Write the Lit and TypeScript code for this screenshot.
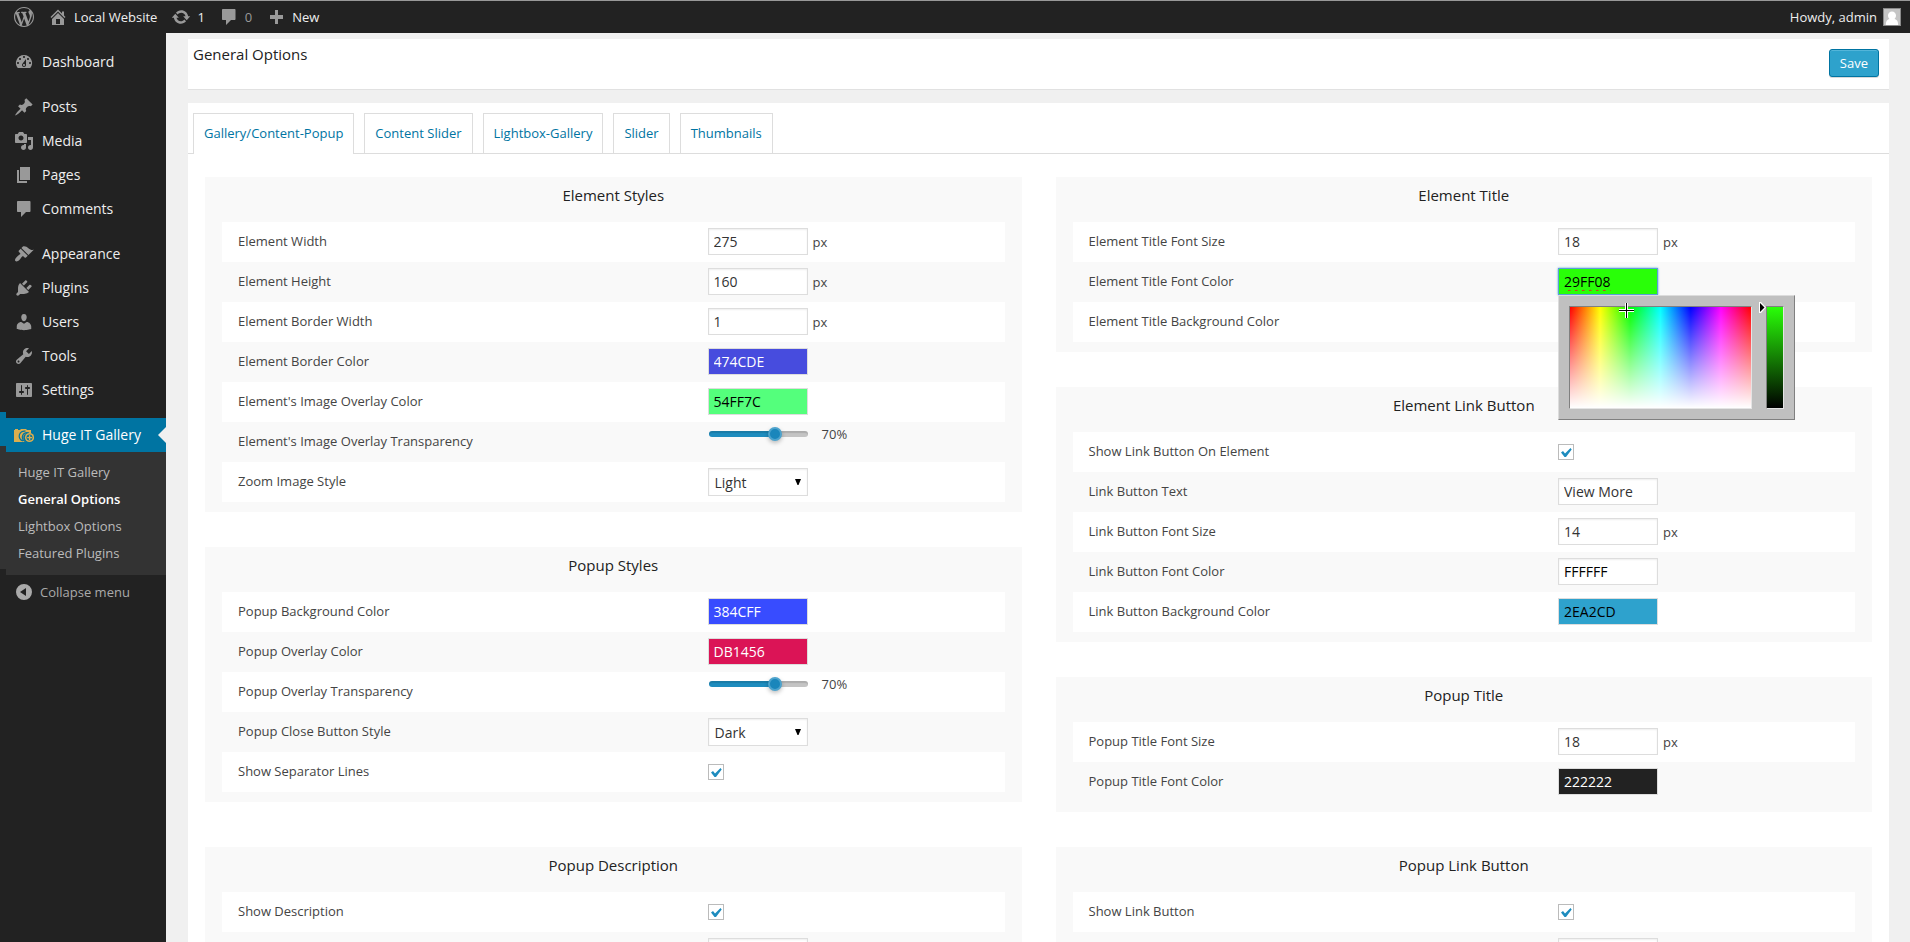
import { LitElement, html, svg, css, nothing } from "lit";
import { customElement, property } from "lit/decorators.js";
import { classMap } from "lit/directives/class-map.js";
import { ifDefined } from "lit/directives/if-defined.js";
import { styleMap } from "lit/directives/style-map.js";

const ICONS: Record<string, string> = {
  wordpress:
    "M20 10c0-5.51-4.49-10-10-10C4.48 0 0 4.49 0 10c0 5.52 4.48 10 10 10 5.51 0 10-4.48 10-10zM7.78 15.37L4.37 6.22c.55-.02 1.17-.08 1.17-.08.5-.06.44-1.13-.06-1.11 0 0-1.45.11-2.37.11-.18 0-.37 0-.58-.01C4.12 2.69 6.87 1.11 10 1.11c2.33 0 4.45.87 6.05 2.34-.68-.11-1.65.39-1.65 1.58 0 .74.45 1.36.9 2.1.35.61.55 1.36.55 2.46 0 1.49-1.4 5-1.4 5l-3.03-8.37c.54-.02.82-.17.82-.17.5-.05.44-1.25-.06-1.22 0 0-1.44.12-2.38.12-.87 0-2.33-.12-2.33-.12-.5-.03-.56 1.2-.06 1.22l.92.08 1.26 3.41zM17.41 10c.24-.64.74-1.87.43-4.25.7 1.29 1.05 2.71 1.05 4.25 0 3.29-1.73 6.24-4.4 7.78.97-2.59 1.94-5.2 2.92-7.78zM6.1 18.09C3.12 16.65 1.11 13.53 1.11 10c0-1.3.23-2.48.72-3.59C3.25 10.3 4.67 14.2 6.1 18.09zm4.03-6.63l2.58 6.98c-.86.29-1.76.45-2.71.45-.79 0-1.57-.11-2.29-.33.81-2.38 1.62-4.74 2.42-7.1z",
  home: "M16 8.5l1.53 1.53-1.06 1.06L10 4.6l-6.47 6.49-1.06-1.06L10 2.5l4 4v-2h2v4zm-6-2.46l6 5.99V18H4v-5.97zM12 17v-5H8v5h4z",
  update:
    "M10.2 3.28c3.53 0 6.43 2.61 6.92 6h2.08l-3.5 4-3.5-4h2.32c-.45-1.97-2.21-3.45-4.32-3.45-1.45 0-2.73.71-3.54 1.78L4.95 5.66C6.23 4.2 8.11 3.28 10.2 3.28zm-.4 13.44c-3.52 0-6.43-2.61-6.92-6H.8l3.5-4c1.17 1.33 2.33 2.67 3.5 4H5.48c.45 1.97 2.21 3.45 4.32 3.45 1.45 0 2.73-.71 3.54-1.78l1.71 1.95c-1.28 1.46-3.15 2.38-5.25 2.38z",
  comment:
    "M4 2h11.500c.6 0 1 .4 1 1v9c0 .6-.4 1-1 1H12l-5 5v-5H4c-.6 0-1-.4-1-1V3c0-.6.4-1 1-1z",
  plus: "M17 8v4h-5v5H9v-5H4V8h5V3h3v5h5z",
  dashboard:
    "M3.76 16h12.480A7.998 7.998 0 0 0 10 3a7.998 7.998 0 0 0-6.240 13zM10 4c.55 0 1 .45 1 1s-.45 1-1 1-1-.45-1-1 .45-1 1-1zM6 6c.55 0 1 .45 1 1s-.45 1-1 1-1-.45-1-1 .45-1 1-1zm8 0c.55 0 1 .45 1 1s-.45 1-1 1-1-.45-1-1 .45-1 1-1zm-5.370 5.550L12 7v6c0 1.100-.9 2-2 2s-2-.9-2-2c0-.57.24-1.080.63-1.450zM4 10c.55 0 1 .45 1 1s-.45 1-1 1-1-.45-1-1 .45-1 1-1zm12 0c.55 0 1 .45 1 1s-.45 1-1 1-1-.45-1-1 .45-1 1-1zm-5 3c0-.55-.45-1-1-1s-1 .45-1 1 .45 1 1 1 1-.45 1-1z",
  post: "M10.44 3.02l1.82-1.82 6.36 6.35-1.83 1.82c-1.05-.68-2.48-.57-3.41.36l-.75.75c-.92.93-1.04 2.35-.35 3.41l-1.83 1.82-2.41-2.41-2.8 2.79c-.42.42-3.38 2.71-3.8 2.29s1.86-3.39 2.28-3.81l2.79-2.79L4.1 9.36l1.83-1.82c1.05.69 2.48.57 3.4-.36l.75-.75c.93-.92 1.05-2.35.36-3.41z",
  media:
    "M13 11V4c0-.55-.45-1-1-1h-1.67L9 1H5L3.67 3H2c-.55 0-1 .45-1 1v7c0 .55.45 1 1 1h10c.55 0 1-.45 1-1zM7 4.5c1.38 0 2.5 1.12 2.5 2.5S8.38 9.5 7 9.5 4.5 8.38 4.5 7 5.62 4.5 7 4.5zM14 6h5v10.5c0 1.38-1.12 2.5-2.5 2.5S14 17.88 14 16.5s1.12-2.5 2.5-2.5c.17 0 .34.02.5.05V9h-3V6zm-4 8.05V13h2v3.5c0 1.38-1.12 2.5-2.5 2.5S7 17.88 7 16.5 8.12 14 9.5 14c.17 0 .34.02.5.05z",
  page: "M6 15V2h10v13H6zm-1 1h8v2H3V5h2v11z",
  appearance:
    "M14.48 11.06L7.41 3.99l1.5-1.5c.5-.56 2.3-.47 3.51.32 1.21.8 1.43 1.28 2.91 2.1 1.18.64 2.45 1.26 4.45.85zm-.71.71L6.7 4.7 4.93 6.47c-.39.39-.39 1.02 0 1.41l1.06 1.06c.39.39.39 1.03 0 1.42-.6.6-1.43 1.11-2.21 1.69-.35.26-.7.53-1.01.84C1.43 14.23.4 16.08 1.4 17.07c.99 1 2.84-.03 4.18-1.36.31-.31.58-.66.85-1.02.57-.78 1.08-1.61 1.69-2.21.39-.39 1.02-.39 1.41 0l1.06 1.06c.39.39 1.02.39 1.41 0z",
  plugins:
    "M13.11 4.36L9.87 7.6 8 5.73l3.24-3.24c.35-.34 1.05-.2 1.56.32.52.51.66 1.21.31 1.55zm-8 1.77l.91-1.12 9.01 9.01-1.19.84c-.71.71-2.63 1.16-3.82 1.16H6.14L4.9 17.26c-.59.59-1.54.59-2.12 0-.59-.58-.59-1.53 0-2.12l1.24-1.24v-3.88c0-1.13.4-3.19 1.09-3.89zm7.26 3.97l3.24-3.24c.34-.35 1.04-.21 1.55.31.52.51.66 1.21.31 1.55l-3.24 3.25z",
  users:
    "M10 9.25c-2.27 0-2.73-3.44-2.73-3.44C7 4.02 7.82 2 9.97 2c2.16 0 2.98 2.02 2.71 3.81 0 0-.41 3.44-2.68 3.44zm0 2.57L12.72 10c2.39 0 4.52 2.33 4.52 4.53v2.49s-3.65 1.13-7.24 1.13c-3.65 0-7.24-1.13-7.24-1.13v-2.49c0-2.25 1.94-4.48 4.47-4.48z",
  tools:
    "M16.68 9.77c-1.34 1.34-3.3 1.67-4.95.99l-5.41 6.52c-.99.99-2.59.99-3.58 0s-.99-2.59 0-3.57l6.52-5.42c-.68-1.65-.35-3.61.99-4.95 1.28-1.28 3.12-1.62 4.72-1.06l-2.89 2.89 2.82 2.82 2.86-2.87c.53 1.58.18 3.39-1.08 4.65zM3.81 16.21c.4.39 1.04.39 1.43 0 .4-.4.4-1.04 0-1.43-.39-.4-1.03-.4-1.43 0-.39.39-.39 1.03 0 1.43z",
  settings:
    "M18 16V4c0-.55-.45-1-1-1H3c-.55 0-1 .45-1 1v12c0 .55.45 1 1 1h14c.55 0 1-.45 1-1zM8 11h1c.55 0 1 .45 1 1s-.45 1-1 1H8v1.5c0 .28-.22.5-.5.5s-.5-.22-.5-.5V13H6c-.55 0-1-.45-1-1s.45-1 1-1h1V5.5c0-.28.22-.5.5-.5s.5.22.5.5V11zm5-2h-1c-.55 0-1-.45-1-1s.45-1 1-1h1V5.5c0-.28.22-.5.5-.5s.5.22.5.5V7h1c.55 0 1 .45 1 1s-.45 1-1 1h-1v5.5c0 .28-.22.5-.5.5s-.5-.22-.5-.5V9z",
  collapse: "M10 2a8 8 0 1 0 0 16 8 8 0 0 0 0-16zM12 6v8l-6-4z",
};

const icon = (name: string) => html`
  <svg class="icon" viewBox="0 0 20 20" aria-hidden="true">
    ${svg`<path fill-rule="evenodd" d=${ICONS[name]}></path>`}
  </svg>
`;

const galleryIcon = html`
  <svg class="icon" viewBox="0 0 20 20" aria-hidden="true">
    <path fill="#dbae4e" d="M0 5h1V4h3v1h2l1-1h5l1 1h4v3.500a5 5 0 0 0-5.500 8.500H0z"></path>
    <path fill="none" stroke="#0074a2" stroke-width="1.200" d="M11.500 6.200a5 5 0 0 0-2.500 9.800M15 8a4.600 4.600 0 0 0-4 8.500"></path>
    <circle cx="15.500" cy="12.500" r="4.600" fill="#dbae4e"></circle>
    <circle cx="15.500" cy="12.500" r="3" fill="#0074a2"></circle>
    <path fill="#dbae4e" d="M14.900 10.200h1.400v1.700H18v1.400h-1.700V15h-1.400v-1.700h-1.700v-1.400h1.700z"></path>
  </svg>
`;

type Field =
  | { kind: "number"; label: string; value: string }
  | { kind: "text"; label: string; value: string }
  | { kind: "color"; label: string; value: string; ink: string; open?: boolean }
  | { kind: "range"; label: string; value: number }
  | { kind: "select"; label: string; value: string; options: string[] }
  | { kind: "check"; label: string }
  | { kind: "blank"; label: string; name: string };

interface Panel {
  title: string;
  fields: Field[];
}

const SECTIONS: Panel[][][] = [
  [
    [
      {
        title: "Element Styles",
        fields: [
          { kind: "number", label: "Element Width", value: "275" },
          { kind: "number", label: "Element Height", value: "160" },
          { kind: "number", label: "Element Border Width", value: "1" },
          { kind: "color", label: "Element Border Color", value: "474CDE", ink: "#fff" },
          { kind: "color", label: "Element's Image Overlay Color", value: "54FF7C", ink: "#000" },
          { kind: "range", label: "Element's Image Overlay Transparency", value: 70 },
          { kind: "select", label: "Zoom Image Style", value: "Light", options: ["Light", "Dark"] },
        ],
      },
      {
        title: "Popup Styles",
        fields: [
          { kind: "color", label: "Popup Background Color", value: "384CFF", ink: "#fff" },
          { kind: "color", label: "Popup Overlay Color", value: "DB1456", ink: "#fff" },
          { kind: "range", label: "Popup Overlay Transparency", value: 70 },
          { kind: "select", label: "Popup Close Button Style", value: "Dark", options: ["Dark", "Light"] },
          { kind: "check", label: "Show Separator Lines" },
        ],
      },
    ],
    [
      {
        title: "Element Title",
        fields: [
          { kind: "number", label: "Element Title Font Size", value: "18" },
          { kind: "color", label: "Element Title Font Color", value: "29FF08", ink: "#000", open: true },
          { kind: "color", label: "Element Title Background Color", value: "FFFFFF", ink: "#000" },
        ],
      },
      {
        title: "Element Link Button",
        fields: [
          { kind: "check", label: "Show Link Button On Element" },
          { kind: "text", label: "Link Button Text", value: "View More" },
          { kind: "number", label: "Link Button Font Size", value: "14" },
          { kind: "color", label: "Link Button Font Color", value: "FFFFFF", ink: "#000" },
          { kind: "color", label: "Link Button Background Color", value: "2EA2CD", ink: "#000" },
        ],
      },
      {
        title: "Popup Title",
        fields: [
          { kind: "number", label: "Popup Title Font Size", value: "18" },
          { kind: "color", label: "Popup Title Font Color", value: "222222", ink: "#fff" },
        ],
      },
    ],
  ],
  [
    [
      {
        title: "Popup Description",
        fields: [
          { kind: "check", label: "Show Description" },
          { kind: "blank", label: "", name: "Description Font Size" },
        ],
      },
    ],
    [
      {
        title: "Popup Link Button",
        fields: [
          { kind: "check", label: "Show Link Button" },
          { kind: "blank", label: "", name: "Link Button Text" },
        ],
      },
    ],
  ],
];

const MENU: [string, string][][] = [
  [["dashboard", "Dashboard"]],
  [
    ["post", "Posts"],
    ["media", "Media"],
    ["page", "Pages"],
    ["comment", "Comments"],
  ],
  [
    ["appearance", "Appearance"],
    ["plugins", "Plugins"],
    ["users", "Users"],
    ["tools", "Tools"],
    ["settings", "Settings"],
  ],
];

const SUBMENU = ["Huge IT Gallery", "General Options", "Lightbox Options", "Featured Plugins"];
const TABS = ["Gallery/Content-Popup", "Content Slider", "Lightbox-Gallery", "Slider", "Thumbnails"];

@customElement("color-picker")
export class ColorPicker extends LitElement {
  @property() color = "29FF08";

  static styles = css`
    :host {
      box-sizing: border-box;
      display: flex;
      align-items: flex-start;
      gap: 14px;
      padding: 10px;
      background: #c0c0c0;
      border: 1px solid;
      border-color: #dcdcdc #808080 #808080 #dcdcdc;
    }
    .field,
    .value {
      position: relative;
      height: 101px;
      border: 1px solid;
      border-color: #808080 #e4e4e4 #e4e4e4 #808080;
    }
    .field {
      width: 181px;
      background:
        linear-gradient(to bottom, rgba(255, 255, 255, 0), #fff),
        linear-gradient(to right, #f00, #ff0, #0f0, #0ff, #00f, #f0f, #f00);
    }
    .value {
      width: 16px;
    }
    .cross {
      position: absolute;
      left: 49px;
      top: -4px;
      width: 15px;
      height: 15px;
    }
    .arrow {
      position: absolute;
      left: -8px;
      top: -5px;
      width: 7px;
      height: 11px;
    }
  `;

  render() {
    return html`
      <div class="field">
        <svg class="cross" viewBox="0 0 15 15" aria-hidden="true">
          <path d="M6 0h3v6h6v3H9v6H6V9H0V6h6z" fill="#fff"></path>
          <path d="M7 0h1v7h7v1H8v7H7V8H0V7h7z" fill="#000"></path>
        </svg>
      </div>
      <div class="value" style=${styleMap({ background: `linear-gradient(#${this.color}, #000)` })}>
        <svg class="arrow" viewBox="0 0 7 11" aria-hidden="true">
          <path d="M0 0h2l5 5.500L2 11H0z" fill="#fff"></path>
          <path d="M1 1l4.500 4.500L1 10z" fill="#000"></path>
        </svg>
      </div>
    `;
  }
}

@customElement("app-root")
export class AppRoot extends LitElement {
  static styles = css`
    :host {
      display: flex;
      flex-direction: column;
      height: 100vh;
      overflow: hidden;
      background: #f0f0f0;
      color: #444;
      font: 13px/18px "Open Sans", sans-serif;
    }
    * {
      box-sizing: border-box;
    }
    a {
      color: inherit;
      text-decoration: none;
    }
    ul,
    h1,
    h2 {
      margin: 0;
      padding: 0;
      list-style: none;
      font-weight: 400;
    }
    .icon {
      flex: none;
      display: block;
      width: 20px;
      height: 20px;
      fill: #999;
    }

    .topbar {
      flex: none;
      display: flex;
      align-items: center;
      gap: 14px;
      height: 33px;
      padding: 0 9px 0 14px;
      border-top: 1px solid #999;
      background: #222;
      color: #eee;
    }
    .topbar a {
      display: flex;
      align-items: center;
      gap: 6px;
    }
    .topbar .muted {
      color: #999;
    }
    .topbar .account {
      margin-left: auto;
    }
    .avatar {
      width: 18px;
      height: 18px;
    }

    .shell {
      flex: 1;
      min-height: 0;
      display: flex;
    }
    .sidebar {
      flex: none;
      width: 166px;
      padding-top: 12px;
      background: #222;
      color: #eee;
      font-size: 14px;
    }
    .group {
      margin-bottom: 11px;
    }
    .item {
      display: flex;
      align-items: center;
      gap: 8px;
      width: 100%;
      height: 34px;
      padding: 0 14px;
    }
    .current {
      position: relative;
      background: #333;
    }
    .current::before,
    .submenu::before,
    .submenu::after {
      content: "";
      position: absolute;
      left: 0;
      width: 6px;
      height: 6px;
    }
    .current::before {
      top: -6px;
      background: #0074a2;
    }
    .submenu::before {
      top: -6px;
      background: #333;
    }
    .submenu::after {
      bottom: 0;
      background: #222;
    }
    .current .item {
      background: #0074a2;
      color: #fff;
    }
    .notch {
      position: absolute;
      right: 0;
      top: 9px;
      border: 8px solid transparent;
      border-left-width: 0;
      border-right-color: #f0f0f0;
    }
    .submenu {
      position: relative;
      padding: 7px 0 8px;
      color: #bbb;
      font-size: 13px;
    }
    .submenu a {
      display: block;
      padding: 0 18px;
      line-height: 27px;
    }
    .submenu .here {
      color: #fff;
      font-weight: 600;
    }
    .collapse {
      border: 0;
      background: none;
      gap: 6px;
      color: #aaa;
      font: inherit;
      font-size: 13px;
    }
    .collapse .icon {
      fill: #aaa;
    }

    .content {
      flex: 1;
      min-width: 0;
      padding: 6px 21px 0 22px;
      overflow: hidden;
    }
    .heading {
      display: flex;
      align-items: flex-start;
      justify-content: space-between;
      padding: 5px 10px 12px 5px;
      margin-bottom: 13px;
      border-bottom: 1px solid #e1e1e1;
      background: #fff;
    }
    h1,
    h2 {
      color: #222;
      font-size: 15px;
      line-height: 20px;
    }
    .save {
      height: 28px;
      margin-top: 5px;
      padding: 0 10px;
      border: 1px solid #0074a2;
      border-radius: 3px;
      background: #2ea2cc;
      box-shadow: inset 0 1px 0 rgba(120, 200, 230, 0.5), 0 1px 0 rgba(0, 0, 0, 0.15);
      color: #fff;
      font: inherit;
    }
    .board {
      padding-bottom: 40px;
      background: #fff;
    }
    .tabs {
      display: flex;
      gap: 10px;
      padding: 10px 5px 0;
      border-bottom: 1px solid #ddd;
    }
    .tabs a {
      padding: 0 10px;
      border: 1px solid #ddd;
      border-bottom: 0;
      background: #fff;
      color: #0074a2;
      line-height: 39px;
    }
    .tabs .active {
      margin-bottom: -1px;
    }
    .sections {
      display: grid;
      gap: 35px;
      padding: 23px 17px 0;
    }
    .section {
      display: grid;
      grid-template-columns: 1fr 1fr;
      gap: 34px;
    }
    .column {
      display: flex;
      flex-direction: column;
      gap: 35px;
    }
    .panel {
      padding: 0 17px 10px;
      background: #f9f9f9;
    }
    .panel h2 {
      padding: 8px 0 17px;
      text-align: center;
    }
    .row {
      display: flex;
      align-items: center;
      height: 40px;
    }
    .row:nth-of-type(odd) {
      background: #fff;
    }
    .row > label {
      flex: none;
      box-sizing: content-box;
      width: 60%;
      padding: 0 0 2px 16px;
    }
    .control {
      position: relative;
      display: flex;
      align-items: center;
      gap: 5px;
    }
    .control.top {
      align-self: flex-start;
      gap: 14px;
      padding: 2px 0 0 1px;
    }
    .box {
      width: 100px;
      height: 27px;
      margin: 0 0 1px;
      padding: 0 5px;
      border: 1px solid #ddd;
      border-radius: 0;
      outline: 0;
      background-color: #fff;
      box-shadow: inset 0 1px 2px rgba(0, 0, 0, 0.07);
      color: #333;
      font: inherit;
      font-size: 14px;
    }
    .box.color {
      box-shadow: none;
    }
    .box.open {
      border-color: #5b9dd9;
      box-shadow: 0 0 2px rgba(30, 140, 190, 0.8);
      text-decoration: underline wavy #d22 1px;
      text-underline-offset: 2px;
    }
    select.box {
      appearance: none;
      height: 28px;
      margin: 0;
      padding: 1px 6px 0;
      background: #fff
        url("data:image/svg+xml,%3Csvg xmlns='http://www.w3.org/2000/svg' width='6' height='6'%3E%3Cpath d='M0 0h6L3.500 6h-1z'/%3E%3C/svg%3E")
        no-repeat right 6px top 10px;
    }
    .check {
      appearance: none;
      width: 16px;
      height: 16px;
      margin: 0;
      border: 1px solid #bbb;
      background: #fff
        url("data:image/svg+xml,%3Csvg xmlns='http://www.w3.org/2000/svg' width='14' height='14'%3E%3Cpath d='M2 7.500l2-1.500 2 2.500L11.500 3l1.200 1.500L7 12H5.500z' fill='%231e8cbe'/%3E%3C/svg%3E");
    }
    .slider {
      appearance: none;
      width: 99px;
      height: 20px;
      margin: 0;
      background: none;
    }
    .slider::-webkit-slider-runnable-track {
      height: 6px;
      border-radius: 3px;
      box-shadow: inset 0 2px 1px rgba(0, 0, 0, 0.12);
      background: linear-gradient(to right, #1e8cbe var(--fill), #c4c4c4 var(--fill));
    }
    .slider::-webkit-slider-thumb {
      appearance: none;
      width: 14px;
      height: 14px;
      margin-top: -4px;
      border: 2px solid #4da3cd;
      border-radius: 50%;
      background: #1a86bb;
      box-shadow: 0 2px 4px rgba(0, 0, 0, 0.25);
    }
    .picker {
      position: absolute;
      left: 0;
      top: 27px;
      z-index: 2;
    }
  `;

  private control(f: Field, id: string) {
    switch (f.kind) {
      case "number":
        return html`<input class="box" type="text" id=${id} .value=${f.value} />
          <span>px</span>`;
      case "text":
        return html`<input class="box" type="text" id=${id} .value=${f.value} />`;
      case "blank":
        return html`<input class="box" type="text" id=${id} aria-label=${f.name} />`;
      case "color":
        return html`<input
            class=${classMap({ box: true, color: f.value !== "FFFFFF", open: !!f.open })}
            type="text"
            id=${id}
            .value=${f.value}
            style=${styleMap({ backgroundColor: `#${f.value}`, color: f.ink })}
          />
          ${f.open ? html`<color-picker class="picker" .color=${f.value}></color-picker>` : nothing}`;
      case "range":
        return html`<input
            class="slider"
            type="range"
            id=${id}
            min="0"
            max="100"
            .value=${String(f.value)}
            style=${styleMap({ "--fill": `${f.value}%` })}
          />
          <output for=${id}>${f.value}%</output>`;
      case "select":
        return html`<select class="box" id=${id}>
          ${f.options.map((o) => html`<option ?selected=${o === f.value}>${o}</option>`)}
        </select>`;
      case "check":
        return html`<input class="check" type="checkbox" id=${id} checked />`;
    }
  }

  private panel(p: Panel, key: string) {
    return html`
      <section class="panel">
        <h2>${p.title}</h2>
        ${p.fields.map((f, i) => {
          const id = `${key}-${i}`;
          return html`<div class="row">
            <label for=${id}>${f.label}</label>
            <div class=${classMap({ control: true, top: f.kind === "range" })}>${this.control(f, id)}</div>
          </div>`;
        })}
      </section>
    `;
  }

  render() {
    return html`
      <header class="topbar">
        <a href="#" aria-label="WordPress">${icon("wordpress")}</a>
        <a href="#">${icon("home")}Local Website</a>
        <a href="#">${icon("update")}1</a>
        <a href="#" class="muted">${icon("comment")}0</a>
        <a href="#">${icon("plus")}New</a>
        <a href="#" class="account">
          Howdy, admin
          <svg class="avatar" viewBox="0 0 18 18" aria-hidden="true">
            <rect width="18" height="18" fill="#8a8a8a"></rect>
            <rect x="1" y="1" width="16" height="16" fill="#c5c5c5"></rect>
            <path fill="#fff" d="M9 3.500c2.300 0 4 1.700 4 4 0 1.600-.7 2.700-1.500 3.400C14 11.500 15 13 15.200 17H2.800C3 13 4 11.500 6.500 10.900 5.700 10.200 5 9.100 5 7.500c0-2.300 1.700-4 4-4z"></path>
          </svg>
        </a>
      </header>
      <div class="shell">
        <nav class="sidebar" aria-label="Main menu">
          ${MENU.map(
            (group) => html`<ul class="group">
              ${group.map(([name, label]) => html`<li><a class="item" href="#">${icon(name)}${label}</a></li>`)}
            </ul>`
          )}
          <div class="current">
            <a class="item" href="#">${galleryIcon}Huge IT Gallery</a>
            <span class="notch"></span>
            <ul class="submenu">
              ${SUBMENU.map((label) => {
                const here = label === "General Options";
                return html`<li>
                  <a class=${classMap({ here })} aria-current=${ifDefined(here ? "page" : undefined)} href="#">${label}</a>
                </li>`;
              })}
            </ul>
          </div>
          <button class="item collapse" type="button">${icon("collapse")}Collapse menu</button>
        </nav>
        <main class="content">
          <div class="heading">
            <h1>General Options</h1>
            <button class="save" type="button">Save</button>
          </div>
          <div class="board">
            <nav class="tabs" aria-label="Views">
              ${TABS.map((t, i) => html`<a class=${classMap({ active: i === 0 })} href="#">${t}</a>`)}
            </nav>
            <div class="sections">
              ${SECTIONS.map(
                (columns, s) => html`<div class="section">
                  ${columns.map(
                    (panels, c) => html`<div class="column">
                      ${panels.map((p, i) => this.panel(p, `f-${s}-${c}-${i}`))}
                    </div>`
                  )}
                </div>`
              )}
            </div>
          </div>
        </main>
      </div>
    `;
  }
}
